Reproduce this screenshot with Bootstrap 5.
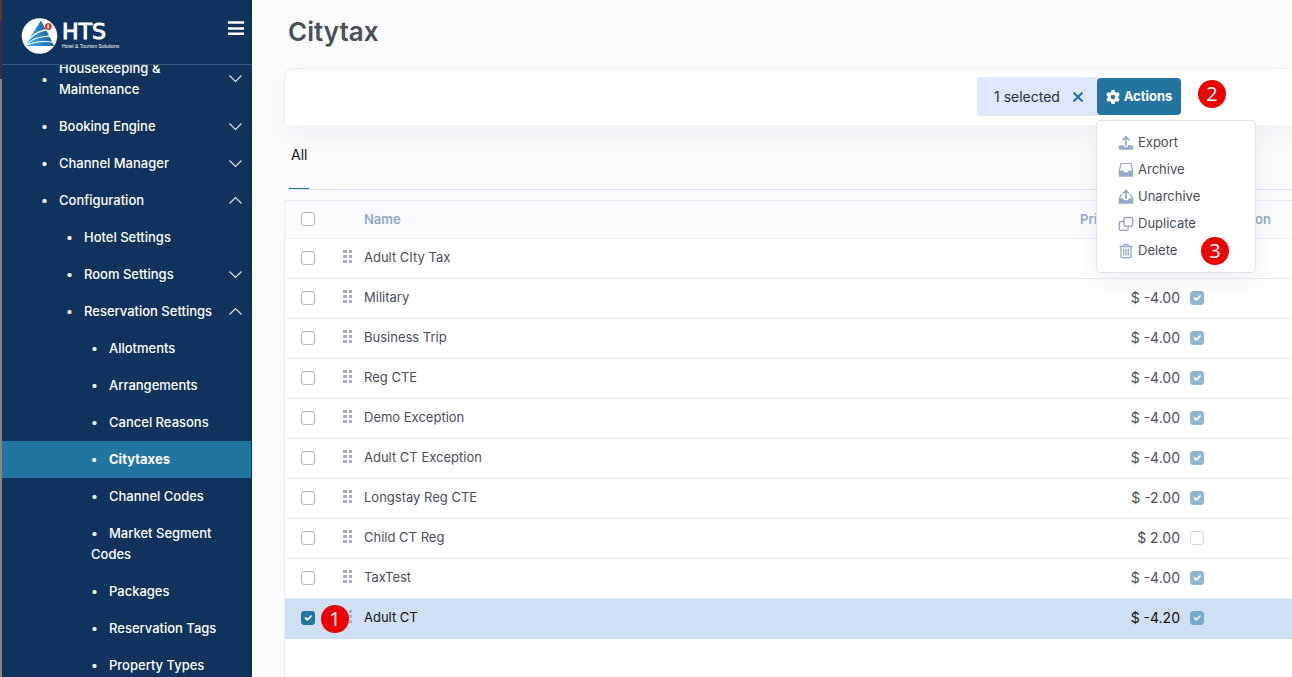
<!DOCTYPE html>
<html lang="en">
<head>
<meta charset="utf-8">
<meta name="viewport" content="width=device-width, initial-scale=1">
<title>Citytax</title>
<link href="https://cdn.jsdelivr.net/npm/bootstrap@5.3.0/dist/css/bootstrap.min.css" rel="stylesheet">
<style>
:root { --navy: #0f335c; --teal: #2274a1; --line: #e8eef8; --muted: #95aac9; }
body { font-family: Inter, "Liberation Sans", sans-serif; font-size: 13px; line-height: 21px; color: #4a5058; background: #f9fbfd; }
.edge-strip { width: 2px; background: linear-gradient(#5b3a33 20px, #3b2c4a 20px, #3b2c4a 79px, #858585 79px); }
.sidebar { width: 250px; background: var(--navy); }
.brand-bar { height: 65px; padding: 16px 8px 0 19px; border-bottom: 1px solid #3a597c; }
.brand-name { font: 400 22px/20px "DejaVu Sans", sans-serif; color: #fff; -webkit-text-stroke: 1px #fff; }
.brand-tag { font: 500 5px/6px "Liberation Sans", sans-serif; color: #fff; margin-top: 1px; }
.brand-text { padding: 6px 0 0 4px; }
.burger { padding: 5px 0 0; border: 0; background: none; }
.menu-scroll { flex: 1 1 0; min-height: 0; overflow: hidden; }
.menu-scroll > ul { margin-top: -15px; }
.side-link { display: flex; align-items: center; padding: 8px 8px 8px 39px; color: #fff; font-weight: 500; text-decoration: none; }
.side-link::before { content: "•"; width: 18px; flex: none; }
.side-link svg { margin-left: auto; flex: none; }
.level-2 .side-link { padding-left: 64px; }
.level-3 .side-link { display: block; padding-left: 89px; padding-right: 30px; margin-right: 1px; }
.level-3 .side-link::before { display: inline-block; }
.level-3 .side-link.active { background: var(--teal); font-weight: 700; }
.page-title { font-size: 26px; line-height: 32px; font-weight: 600; margin: 0; padding: 16px 0 0 4px; }
.toolbar-card { margin-top: 20px; height: 57px; padding: 8px 111px 8px 0; background: #fff; border: 1px solid var(--line); border-width: 1px 0 0 1px; border-radius: 10px 0 0 0; box-shadow: 0 12px 24px rgba(18,38,63,.04); }
.selected-chip { height: 39px; width: 120px; padding-left: 17px; background: #e1e7fd; border-radius: 3px 0 0 3px; font-size: 14px; color: #283040; }
.chip-close { border: 0; background: none; padding: 0; margin-left: 12px; line-height: 0; }
.btn-actions { height: 37px; width: 84px; padding: 0; background: var(--teal); color: #fff; font-size: 13px; font-weight: 700; border-radius: 4px; border: 0; }
.btn-actions:hover { background: var(--teal); color: #fff; }
.actions-wrap { padding-top: 1px; }
.step { position: absolute; width: 28px; height: 28px; border-radius: 50%; background: #e90505; color: #fff; font: 400 20px/28px "Open Sans", sans-serif; text-align: center; z-index: 1001; }
.step-actions { left: 101px; top: 3px; }
.step-delete { left: 104px; top: 0; }
.step-row { left: 36px; top: 6px; }
.actions-menu { top: 43px; right: -75px; width: 160px; min-width: 0; padding: 8px 0; border: 1px solid #dfe4ec; border-radius: 4px; box-shadow: 0 12px 24px rgba(18,38,63,.06); }
.actions-menu .dropdown-item { padding: 3px 0 3px 21px; font-size: 13px; line-height: 21px; color: #4a5058; display: flex; align-items: center; gap: 4px; }
.actions-menu svg { color: var(--muted); flex: none; }
.tabs { margin-left: 4px; padding-top: 19px; height: 65px; border-bottom: 1px solid #dbe0e8; }
.tabs a { display: block; width: 20px; margin-left: 1px; height: 45px; border-bottom: 1px solid var(--teal); color: #111; text-decoration: none; white-space: nowrap; text-indent: 2px; font-size: 14px; }
.tax-list { margin-top: 10px; border: 1px solid var(--line); border-width: 1px 0 0 1px; background: #fff; }
.tax-table { table-layout: fixed; margin: 0; font-size: 13px; }
.tax-table > thead > tr > th { height: 37px; padding: 0; background: #f9fbfd; color: var(--muted); font-weight: 600; border-bottom: 1px solid var(--line); vertical-align: middle; }
.tax-table > tbody > tr > td { height: 40px; padding: 0; color: #4a5058; border-bottom: 1px solid var(--line); vertical-align: middle; background: none; }
.tax-table > tbody > tr > .text-cell { padding-bottom: 2px; }
.tax-table > tbody > tr.picked > td { background: #cfdff4; color: #111; border-color: #cfdff4; }
.tax-table .form-check-input { display: block; width: 14px; height: 14px; margin: 0; border: 1px solid #b3b6bb; border-radius: 3px; }
.tax-table .form-check-input:checked { background-color: var(--teal); border-color: var(--teal); background-size: 12px; }
.tax-table .form-check-input:disabled { opacity: .5; }
.pick { padding-left: 16px !important; position: relative; }
.grip { display: block; color: #a9b0bd; margin: -2px 0 0 1px; }
.tax-table > tbody > tr > .price-cell { padding-right: 10px; text-align: right; font-size: 14px; }
.tax-table > thead > tr > .exception-head { padding-right: 21px; text-align: right; }
</style>
</head>
<body>
<svg class="d-none">
  <symbol id="down" viewBox="0 0 16 16"><path d="M1.500 4.500l6 6 6-6" fill="none" stroke="#dfe6ef" stroke-width="1.200"/></symbol>
  <symbol id="up" viewBox="0 0 16 16"><path d="M1.500 10.500l6-6 6 6" fill="none" stroke="#dfe6ef" stroke-width="1.200"/></symbol>
  <symbol id="dots" viewBox="0 0 10 14"><path d="M0 0h4v3H0zM6 0h3v3H6zM0 5h4v3H0zM6 5h3v3H6zM0 10h4v3H0zM6 10h3v3H6z" fill="currentColor"/></symbol>
</svg>
<div class="d-flex vh-100 overflow-hidden">
  <div class="edge-strip flex-shrink-0"></div>
  <aside class="sidebar flex-shrink-0 d-flex flex-column">
    <div class="brand-bar flex-shrink-0 d-flex justify-content-between align-items-start">
      <div class="d-flex">
        <svg width="37" height="38" viewBox="0 0 37 38" aria-hidden="true">
          <defs><linearGradient id="sail" x1="0" x2="1"><stop offset="0" stop-color="#45b4ec"/><stop offset="1" stop-color="#1766ad"/></linearGradient></defs>
          <circle cx="18.500" cy="20" r="17.800" fill="#fff"/>
          <path d="M20 4.500L12 17Q8 23 5 27Q11 16 24.500 13z" fill="url(#sail)"/>
          <path d="M25.300 14.500L28 19.500Q14 20 5.500 27.500Q12 17 25.300 14.500z" fill="url(#sail)"/>
          <path d="M28.500 20.800L31 25.500Q16 23.500 5.500 28.500Q14 21 28.500 20.800z" fill="url(#sail)"/>
          <path d="M4.500 30Q18 24.500 31.500 26.700L33.500 30z" fill="url(#sail)"/>
          <circle cx="27.300" cy="10.500" r="3.500" fill="#e03c31"/><rect x="26.500" y="8.700" width="1.600" height="3.600" fill="#fff"/>
        </svg>
        <div class="brand-text"><div class="brand-name">HTS</div><div class="brand-tag text-nowrap">Hotel &amp; Tourism Solutions</div></div>
      </div>
      <button class="burger" type="button" aria-label="Toggle menu"><svg class="d-block" width="16" height="15" viewBox="0 0 16 15"><path d="M0 1.500h16M0 7.500h16M0 12.800h16" stroke="#fff" stroke-width="2.600"/></svg></button>
    </div>
    <nav class="menu-scroll">
      <ul class="list-unstyled mb-0">
        <li><a class="side-link" href="#"><span>Housekeeping &amp;<br>Maintenance</span><svg width="16" height="16"><use href="#down"/></svg></a></li>
        <li><a class="side-link" href="#">Booking Engine<svg width="16" height="16"><use href="#down"/></svg></a></li>
        <li><a class="side-link" href="#">Channel Manager<svg width="16" height="16"><use href="#down"/></svg></a></li>
        <li><a class="side-link" href="#">Configuration<svg width="16" height="16"><use href="#up"/></svg></a>
          <ul class="list-unstyled level-2">
            <li><a class="side-link" href="#">Hotel Settings</a></li>
            <li><a class="side-link" href="#">Room Settings<svg width="16" height="16"><use href="#down"/></svg></a></li>
            <li><a class="side-link" href="#">Reservation Settings<svg width="16" height="16"><use href="#up"/></svg></a>
              <ul class="list-unstyled level-3">
                <li><a class="side-link" href="#">Allotments</a></li>
                <li><a class="side-link" href="#">Arrangements</a></li>
                <li><a class="side-link" href="#">Cancel Reasons</a></li>
                <li><a class="side-link active" href="#" aria-current="page">Citytaxes</a></li>
                <li><a class="side-link" href="#">Channel Codes</a></li>
                <li><a class="side-link" href="#">Market Segment Codes</a></li>
                <li><a class="side-link" href="#">Packages</a></li>
                <li><a class="side-link" href="#">Reservation Tags</a></li>
                <li><a class="side-link" href="#">Property Types</a></li>
              </ul>
            </li>
          </ul>
        </li>
      </ul>
    </nav>
  </aside>

  <main class="flex-grow-1 d-flex flex-column ps-4" style="min-width:0">
    <div class="ps-2 d-flex flex-column flex-grow-1">
    <h1 class="page-title">Citytax</h1>
    <div class="toolbar-card d-flex justify-content-end">
      <div class="selected-chip d-flex align-items-center"><span>1 selected</span>
        <button class="chip-close" type="button" aria-label="Clear selection"><svg width="12" height="12" viewBox="0 0 12 12"><path d="M1.500 1.500l9 9m0-9l-9 9" stroke="#2274a1" stroke-width="2"/></svg></button>
      </div>
      <div class="actions-wrap position-relative">
        <button class="btn btn-actions d-flex align-items-center justify-content-center gap-1" type="button" aria-expanded="true">
          <svg width="14" height="14" viewBox="0 0 16 16" fill="#fff"><path fill-rule="evenodd" d="M6.300 0h3.400l.5 2.300 1.500.9L14 2.500l1.700 2.900L14 7v2l1.700 1.600-1.700 2.900-2.300-.7-1.500.9-.5 2.300H6.300l-.5-2.300-1.500-.9-2.300.7-1.700-2.900L2 9V7L.300 5.400 2 2.500l2.300.7 1.500-.9zM8 5.400a2.600 2.600 0 1 0 0 5.200 2.600 2.600 0 0 0 0-5.200z"/></svg>Actions</button>
        <span class="step step-actions">2</span>
        <ul class="dropdown-menu actions-menu show">
          <li><a class="dropdown-item" href="#"><svg width="16" height="16" viewBox="0 0 16 16"><path d="M8 11V2M4.500 5.300L8 1.800l3.500 3.500" fill="none" stroke="currentColor" stroke-width="1.700"/><path fill-rule="evenodd" d="M2.200 10.300H6v.8a1 1 0 0 0 1 1h2a1 1 0 0 0 1-1v-.8h3.800a1.500 1.500 0 0 1 1.500 1.500v1.400a1.500 1.500 0 0 1-1.500 1.500H2.200a1.500 1.500 0 0 1-1.500-1.500v-1.400a1.500 1.500 0 0 1 1.500-1.500zM12.500 12v1h1v-1z" fill="currentColor"/></svg>Export</a></li>
          <li><a class="dropdown-item" href="#"><svg width="16" height="16" viewBox="0 0 16 16"><path d="M1.300 9L3 1.500h10L14.700 9" fill="none" stroke="currentColor" stroke-width="1.200"/><path d="M.7 8.500h4.600l1.200 2h3l1.200-2h4.600v6.200H.7z" fill="currentColor"/></svg>Archive</a></li>
          <li><a class="dropdown-item" href="#"><svg width="16" height="16" viewBox="0 0 16 16"><path d="M8 10V2M5 4.500l3-3 3 3" fill="none" stroke="currentColor" stroke-width="1.700"/><path d="M4.500 6.200H3L1.300 9.500M11.500 6.200H13l1.700 3.300" fill="none" stroke="currentColor" stroke-width="1.200"/><path d="M.7 9.200h4.200l1.300 2h3.600l1.300-2h4.200v5.500H.7z" fill="currentColor"/></svg>Unarchive</a></li>
          <li><a class="dropdown-item" href="#"><svg width="16" height="16" viewBox="0 0 16 16" fill="none" stroke="currentColor" stroke-width="1.400"><rect x="6" y="1.500" width="8.700" height="8.700" rx="1.500"/><path d="M6 5.500H2.800a1.500 1.500 0 0 0-1.500 1.500v5.800a1.500 1.500 0 0 0 1.500 1.500h5.800a1.500 1.500 0 0 0 1.500-1.500v-2.600"/></svg>Duplicate</a></li>
          <li class="position-relative"><a class="dropdown-item" href="#"><svg width="16" height="16" viewBox="0 0 16 16" fill="none" stroke="currentColor" stroke-width="1.300"><path d="M1.500 3.500h13M5.500 3.300l.8-1.900h3.400l.8 1.900M3 3.500v9.700a1.500 1.500 0 0 0 1.500 1.500h7a1.500 1.500 0 0 0 1.500-1.500V3.500M5.700 5.800v6.600M8 5.800v6.600M10.300 5.800v6.600"/></svg>Delete</a><span class="step step-delete">3</span></li>
        </ul>
      </div>
    </div>

    <nav class="tabs"><a href="#">All</a></nav>

    <section class="tax-list flex-grow-1">
      <table class="table tax-table">
        <colgroup><col style="width:57px"><col style="width:22px"><col><col style="width:110px"><col style="width:102px"></colgroup>
        <thead><tr><th class="pick"><input class="form-check-input" type="checkbox" aria-label="Select all"></th><th></th><th>Name</th><th>Price</th><th class="exception-head">Is Exception</th></tr></thead>
        <tbody id="taxes"></tbody>
      </table>
    </section>
    </div>
  </main>
</div>
<script>
const taxes = [
  ['Adult CIty Tax', '4.00', false], ['Military', '-4.00', true], ['Business Trip', '-4.00', true],
  ['Reg CTE', '-4.00', true], ['Demo Exception', '-4.00', true], ['Adult CT Exception', '-4.00', true],
  ['Longstay Reg CTE', '-2.00', true], ['Child CT Reg', '2.00', false], ['TaxTest', '-4.00', true],
  ['Adult CT', '-4.20', true, true]
];
document.getElementById('taxes').innerHTML = taxes.map(([name, price, exception, picked]) => `
  <tr class="${picked ? 'picked' : ''}">
    <td class="pick"><input class="form-check-input" type="checkbox" aria-label="Select ${name}" ${picked ? 'checked' : ''}>${picked ? '<span class="step step-row">1</span>' : ''}</td>
    <td><svg class="grip" width="10" height="14"><use href="#dots"/></svg></td>
    <td class="text-cell">${name}</td>
    <td class="text-cell price-cell">$ ${price}</td>
    <td><input class="form-check-input" type="checkbox" aria-label="${name} is exception" ${exception ? 'checked' : ''} disabled></td>
  </tr>`).join('');
</script>
<script src="https://cdn.jsdelivr.net/npm/bootstrap@5.3.0/dist/js/bootstrap.bundle.min.js"></script>
</body>
</html>
